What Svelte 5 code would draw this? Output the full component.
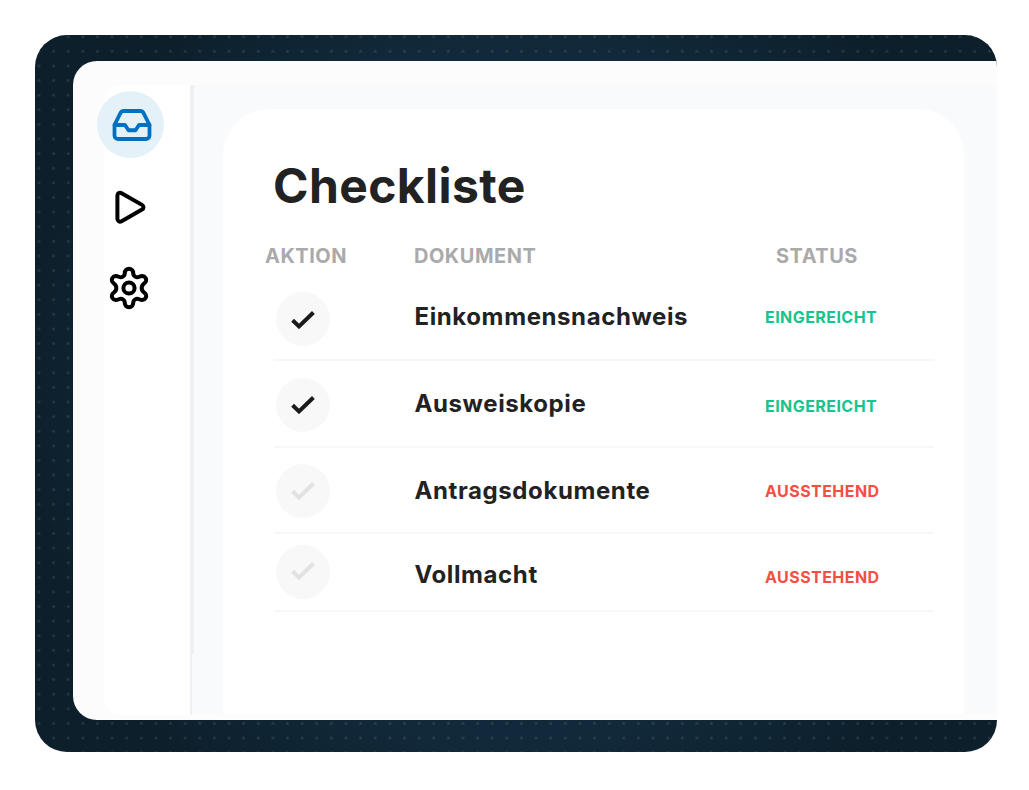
<script>
  const rows = [
    { name: "Einkommensnachweis", done: true },
    { name: "Ausweiskopie", done: true },
    { name: "Antragsdokumente", done: false },
    { name: "Vollmacht", done: false },
  ];
</script>

<div class="backdrop">
  <!-- dot grid behind the window -->
  <svg class="dots" aria-hidden="true">
    <defs>
      <pattern id="dot" width="14.62" height="14.61" patternUnits="userSpaceOnUse" x="-3.3" y="-5.6">
        <circle cx="7.3" cy="7.3" r="1.5" fill="#fff" fill-opacity="0.1" />
      </pattern>
    </defs>
    <rect width="100%" height="100%" fill="url(#dot)" />
  </svg>

  <div class="window">
    <nav class="sidebar">
      <button class="nav-item active" aria-label="Posteingang">
        <svg width="42" height="42" viewBox="0 0 24 24">
          <path d="M22 12h-6l-2 3h-4l-2-3H2" />
          <path d="M5.45 5.11 2 12v6a2 2 0 0 0 2 2h16a2 2 0 0 0 2-2v-6l-3.45-6.89A2 2 0 0 0 16.76 4H7.24a2 2 0 0 0-1.79 1.11z" />
        </svg>
      </button>
      <button class="nav-item" aria-label="Start">
        <svg width="50" height="50" viewBox="0 0 50 50">
          <path d="M13.4 13.6v23.200c0 2.500 2.200 3.500 4.200 2.400l20.400-11.700c2-1.200 2-3.400 0-4.600L17.600 11.200c-2-1.100-4.200 0-4.200 2.400z" />
        </svg>
      </button>
      <button class="nav-item" aria-label="Einstellungen">
        <svg width="50" height="52" viewBox="0 0 50 52">
          <circle cx="25" cy="26" r="5.6" />
          <path d="M20.800 11a4.200 4.200 0 0 1 8.400 0c0 3.400 3.200 5 6 3.700 6-2.700 9.600 3.800 4.800 6.900-3.100 2.200-3.100 6.600 0 8.800 4.800 3.100 1.200 9.600-4.800 6.900-2.800-1.300-6 .3-6 3.700a4.200 4.200 0 0 1-8.400 0c0-3.400-3.200-5-6-3.700-6 2.700-9.600-3.800-4.800-6.900 3.100-2.200 3.100-6.600 0-8.800-4.800-3.100-1.200-9.600 4.800-6.900 2.800 1.300 6-.3 6-3.700z" />
        </svg>
      </button>
    </nav>
    <div class="divider"></div>

    <main>
      <section class="card">
        <h1>Checkliste</h1>
        <div class="head">
          <span>AKTION</span>
          <span>DOKUMENT</span>
          <span>STATUS</span>
        </div>
        <ul>
          {#each rows as row}
            <li class:done={row.done}>
              <span class="check">
                <svg width="24" height="18" viewBox="0 0 24 18">
                  <path d="M1.6 9.3 8 15.4 22.4 1.5" />
                </svg>
              </span>
              <span class="name">{row.name}</span>
              <span class="status">{row.done ? "EINGEREICHT" : "AUSSTEHEND"}</span>
            </li>
          {/each}
        </ul>
      </section>
    </main>
  </div>
</div>

<style>
  :global(body) { background: #fff; }

  .backdrop {
    position: relative; box-sizing: border-box; width: 962px; height: 717px;
    margin: 35px 0 0 35px; padding: 26px 0 32px 38px;
    border-radius: 32px; overflow: hidden;
    background: radial-gradient(circle at center, #112a3b 340px, #0d1f2b 490px);
    font-family: Inter, "Liberation Sans", sans-serif;
  }
  .dots { position: absolute; inset: 0; width: 100%; height: 100%; }

  .window {
    position: relative; box-sizing: border-box; display: flex; height: 659px;
    padding: 24px 0 5px 31px; background: #fcfcfc; border-radius: 24px 0 0 24px;
  }

  /* --- Sidebar --- */
  .sidebar {
    box-sizing: border-box; width: 86px; height: 630px; padding-top: 6px;
    display: flex; flex-direction: column; gap: 14px;
    background: #fff; border-radius: 16px 0 0 16px;
  }
  .nav-item {
    width: 67px; height: 67px; margin-left: -7px; padding: 0;
    display: grid; place-items: center; border: 0; border-radius: 50%;
    background: none; cursor: pointer;
  }
  .nav-item svg { fill: none; stroke: #000; stroke-width: 4; stroke-linecap: round; stroke-linejoin: round; }
  .nav-item:not(.active) svg { margin: 2px 0 0 -3px; }
  .nav-item.active { background: #e4f1f9; }
  .nav-item.active svg { stroke: #0070c0; stroke-width: 2.15; margin-left: 2px; }

  /* the rule thins out near the bottom */
  .divider {
    width: 4px; height: 630px; margin-right: -2px; position: relative; z-index: 1;
    background:
      linear-gradient(#edf1f4, #edf1f4) 0 0 / 4px 569px no-repeat,
      linear-gradient(#edf1f4, #edf1f4) 0 0 / 2px 630px no-repeat;
  }

  main {
    box-sizing: border-box; flex: 1; height: 629px; padding: 24px 33px 0 31px;
    background: #f8fafc;
  }
  .card {
    box-sizing: border-box; height: 605px; padding: 48px 30px 0 51px;
    background: #fff; border-radius: 46px 46px 0 0;
  }

  h1 { margin: 0 0 0 -1px; font-size: 48px; line-height: 58px; font-weight: 700; color: #222; letter-spacing: 0.4px; }

  .head, li { display: grid; grid-template-columns: 140px 351px 1fr; }
  .head {
    height: 60px; padding-top: 29px; box-sizing: border-box;
    font-size: 20px; line-height: 24px; font-weight: 700; color: #aaa; letter-spacing: 0.5px;
  }
  .head span:first-child { margin-left: -9px; }
  .head span:last-child { margin-left: 11px; }

  ul { list-style: none; margin: 0; padding: 0; }
  li { box-sizing: border-box; height: 86px; border-bottom: 2px solid #f7f7f7; align-items: start; }
  .check {
    width: 54px; height: 54px; margin: 17px 0 0 2px;
    display: grid; place-items: center; border-radius: 50%; background: #f8f8f8;
  }
  .check svg { fill: none; stroke: #e2e2e2; stroke-width: 4; }
  .done .check svg { stroke: #1a1a1a; }
  .name { margin: 27px 0 0 0.5px; font-size: 24px; line-height: 30px; font-weight: 700; color: #222; letter-spacing: 0.6px; }
  .status { margin-top: 32px; font-size: 16px; line-height: 20px; font-weight: 700; color: #f44f43; letter-spacing: 0.44px; }
  .done .status { color: #17c48d; }

  /* rows are not spaced evenly */
  li:nth-child(1) .check svg { margin-top: 2px; }
  li:nth-child(2) { height: 87px; }
  li:nth-child(2) .name { margin-top: 28px; }
  li:nth-child(2) .status { margin-top: 35px; }
  li:nth-child(3) .check { margin-top: 16px; }
  li:nth-child(3) .check svg { margin-top: -1px; }
  li:nth-child(3) .name { margin-top: 28px; }
  li:nth-child(3) .status { margin-top: 33px; }
  li:nth-child(4) { height: 78px; }
  li:nth-child(4) .check { margin-top: 11px; }
  li:nth-child(4) .check svg { margin-top: -3px; }
  li:nth-child(4) .name { margin-top: 26px; }
  li:nth-child(4) .status { margin-top: 33px; }
</style>
